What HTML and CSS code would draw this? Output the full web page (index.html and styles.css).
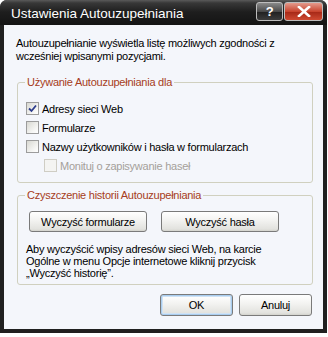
FILE: index.html
```html
<!DOCTYPE html>
<html lang="pl">
<head>
    <meta charset="UTF-8">
    <title>Ustawienia Autouzupełniania</title>
    <link rel="stylesheet" href="styles.css">
</head>
<body>
    <div class="window">
        <div class="titlebar">
            <span class="title">Ustawienia Autouzupełniania</span>
            <div class="caption-buttons">
                <span class="cap-btn help">?</span>
                <span class="cap-btn close">
                    <svg width="14" height="11" viewBox="0 0 14 11">
                        <path d="M2 1 L12 10 M12 1 L2 10" stroke="#fff" stroke-width="2.6" stroke-linecap="square"/>
                    </svg>
                </span>
            </div>
        </div>

        <div class="client">
            <p class="intro">Autouzupełnianie wyświetla listę możliwych zgodności z wcześniej wpisanymi pozycjami.</p>

            <fieldset class="group group-use">
                <legend>Używanie Autouzupełniania dla</legend>
                <label class="check-row">
                    <span class="box checked">
                        <svg width="9" height="9" viewBox="0 0 9 9"><path d="M1 4.5 L3.5 7 L8 1.5" fill="none" stroke="#2c3c8c" stroke-width="1.8"/></svg>
                    </span>
                    Adresy sieci Web
                </label>
                <label class="check-row"><span class="box"></span>Formularze</label>
                <label class="check-row"><span class="box"></span>Nazwy użytkowników i hasła w formularzach</label>
                <label class="check-row sub disabled"><span class="box"></span>Monituj o zapisywanie haseł</label>
            </fieldset>

            <fieldset class="group group-clear">
                <legend>Czyszczenie historii Autouzupełniania</legend>
                <div class="clear-buttons">
                    <button class="btn wide">Wyczyść formularze</button>
                    <button class="btn wide">Wyczyść hasła</button>
                </div>
                <p class="note">Aby wyczyścić wpisy adresów sieci Web, na karcie Ogólne w menu Opcje internetowe kliknij przycisk „Wyczyść historię”.</p>
            </fieldset>

            <div class="footer">
                <button class="btn default">OK</button>
                <button class="btn">Anuluj</button>
            </div>
        </div>
    </div>
</body>
</html>
```

FILE: styles.css
```css
body {
    margin: 0;
    background: #fff;
    font-family: "Liberation Sans", Arial, sans-serif;
    font-size: 11px;
    letter-spacing: -0.25px;
    color: #000;
}

.window {
    width: 327px;
    height: 333px;
    background: #202020;
    border-radius: 7px 7px 0 0;
    display: flex;
    flex-direction: column;
    box-sizing: border-box;
}

.titlebar {
    height: 25px;
    display: flex;
    align-items: center;
    justify-content: space-between;
    padding: 0 4px 0 11px;
    border-radius: 7px 7px 0 0;
    background: linear-gradient(#5a5a5a 0px, #383838 3px, #1e1e1e 12px, #141414 25px);
}

.title {
    color: #fff;
    font-size: 13.5px;
    letter-spacing: 0;
    padding-top: 2px;
}

.caption-buttons {
    display: flex;
    gap: 1px;
    align-self: flex-start;
    margin-top: 2px;
}

.cap-btn {
    height: 19px;
    display: flex;
    align-items: center;
    justify-content: center;
    border: 1px solid #bdbdbd;
    border-radius: 3px;
    box-sizing: border-box;
    color: #fff;
    font-weight: bold;
    font-size: 13px;
}

.help {
    width: 27px;
    background: linear-gradient(#8a8a8a, #4a4a4a 50%, #222 55%, #3c3c3c);
}

.close {
    width: 39px;
    background: linear-gradient(#e49a8c, #c8452f 50%, #a82a18 55%, #cf4a32);
}

.client {
    flex: 1;
    margin: 0 4px 4px 4px;
    background: #f4f6fb;
    display: flex;
    flex-direction: column;
    padding: 12px 10px 0 13px;
}

.intro {
    margin: 0 0 13px -1px;
    line-height: 13px;
    width: 275px;
}

.group {
    margin: 0;
    border: 1px solid #d0d0bf;
    border-radius: 3px;
    padding: 10px 8px 7px 8px;
}

.group legend {
    color: #a63d22;
    padding: 0 2px;
    margin-left: -1px;
    line-height: 13px;
}

.check-row {
    display: flex;
    align-items: center;
    gap: 3px;
    height: 19px;
}

.check-row.sub {
    padding-left: 18px;
}

.check-row.disabled {
    color: #a4a09a;
}

.box {
    width: 13px;
    height: 13px;
    box-sizing: border-box;
    border: 1px solid #9c9c9c;
    background: linear-gradient(135deg, #d8d8d2, #f6f6f4 70%, #fff);
    display: flex;
    align-items: center;
    justify-content: center;
}

.disabled .box {
    border-color: #cfcdc4;
    background: #f4f4f2;
}

.group-clear {
    margin-top: 6px;
    padding-top: 9px;
    padding-bottom: 5px;
}

.clear-buttons {
    display: flex;
    gap: 14px;
    padding-left: 3px;
}

.btn {
    font-family: inherit;
    font-size: 11px;
    letter-spacing: -0.25px;
    height: 22px;
    border: 1px solid #7a7a7a;
    border-radius: 3px;
    background: linear-gradient(#fff, #f4f4f2 40%, #e2e2de 90%, #d2d2cc);
    color: #000;
    padding: 0;
}

.btn.wide {
    width: 118px;
    height: 21px;
}

.note {
    margin: 11px 0 0 0;
    line-height: 12px;
    width: 262px;
}

.footer {
    display: flex;
    justify-content: flex-end;
    gap: 6px;
    margin-top: 9px;
    padding-right: 1px;
}

.footer .btn {
    width: 73px;
}

.btn.default {
    box-shadow: inset 0 0 0 1px #a9cdef, inset 0 0 0 2px #cfe2f5;
}
```
